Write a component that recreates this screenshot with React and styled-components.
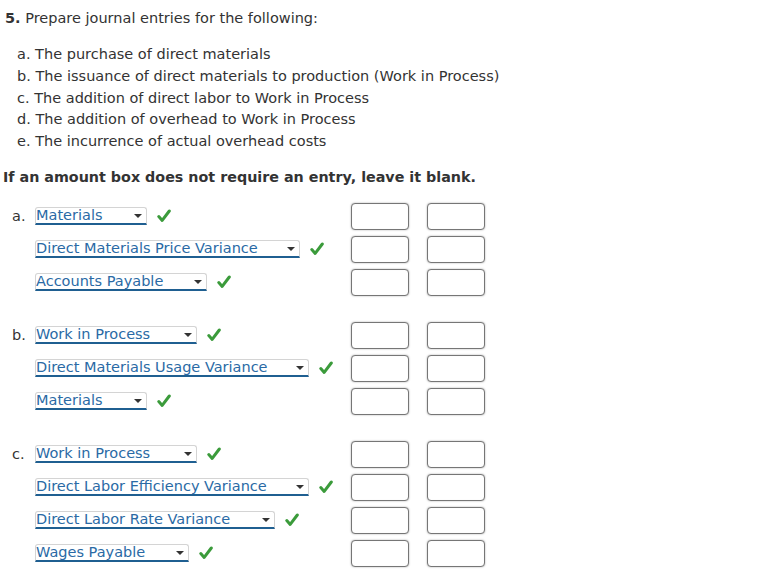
import styled, { createGlobalStyle } from 'styled-components'

const Global = createGlobalStyle`
    body {
        margin: 0;
        background: #fff;
        font-family: "DejaVu Sans", Verdana, sans-serif;
        color: #333;
    }
`

const Page = styled.div`
    padding: 8px 5px 0 5px;
    font-size: 14.5px;
`

const Question = styled.p`
    margin: 0;
    line-height: 20px;
`

const Num = styled.b`
    font-weight: bold;
`

const Parts = styled.ul`
    list-style: none;
    margin: 16px 0 0 0;
    padding: 0 0 0 12px;
`

const Part = styled.li`
    line-height: 21.8px;
`

const Note = styled.p`
    margin: 14px 0 0 -2px;
    font-weight: bold;
    font-size: 14.3px;
    line-height: 20px;
`

const Entries = styled.div`
    margin-top: 13px;
    display: flex;
    flex-direction: column;
    gap: 20px;
`

const Block = styled.div`
    display: flex;
    flex-direction: column;
`

const Row = styled.div`
    display: grid;
    grid-template-columns: 328px 58px 58px;
    column-gap: 18px;
    height: 33px;
    align-items: center;
`

const Left = styled.div`
    display: flex;
    align-items: center;
    padding-left: 7px;
`

const Label = styled.span`
    width: 23px;
    flex: none;
    line-height: 18px;
`

const Select = styled.div`
    width: ${p => p.w}px;
    height: 18px;
    box-sizing: border-box;
    display: flex;
    align-items: center;
    justify-content: space-between;
    border: 1px solid #d4d4d4;
    border-bottom: 2px solid #1f5f91;
    border-radius: 3px 3px 0 0;
    color: #2a6aa5;
    line-height: 15px;
    padding: 0 4px 0 0;
    background: #fff;
`

const SelText = styled.span`
    white-space: nowrap;
    margin-top: -1px;
`

const Caret = styled.span`
    width: 0;
    height: 0;
    border-left: 4px solid transparent;
    border-right: 4px solid transparent;
    border-top: 4px solid #333;
`

const Check = styled.svg`
    width: 14px;
    height: 14px;
    margin-left: 10px;
    flex: none;
`

const Amount = styled.div`
    height: 27px;
    box-sizing: border-box;
    border: 1.5px solid #767676;
    border-radius: 4px;
    background: #fff;
    box-shadow: 0 0 2px rgba(0, 0, 0, 0.35), inset 0 0 1px rgba(0,0,0,0.1);
`

const blocks = [
    { label: 'a.', rows: [['Materials', 112], ['Direct Materials Price Variance', 265], ['Accounts Payable', 172]] },
    { label: 'b.', rows: [['Work in Process', 162], ['Direct Materials Usage Variance', 277], ['Materials', 112]] },
    { label: 'c.', rows: [['Work in Process', 162], ['Direct Labor Efficiency Variance', 276], ['Direct Labor Rate Variance', 240], ['Wages Payable', 154]] },
]

const Tick = () => (
    <Check viewBox="0 0 14 14">
        <path d="M1.8 7.6 L5.2 11.4 L12.3 2" fill="none" stroke="#3b9b3b" strokeWidth="3" strokeLinecap="round" strokeLinejoin="round" />
    </Check>
)

const App = () => {
    return (
        <>
            <Global />
            <Page>
                <Question><Num>5.</Num> Prepare journal entries for the following:</Question>
                <Parts>
                    <Part>a. The purchase of direct materials</Part>
                    <Part>b. The issuance of direct materials to production (Work in Process)</Part>
                    <Part>c. The addition of direct labor to Work in Process</Part>
                    <Part>d. The addition of overhead to Work in Process</Part>
                    <Part>e. The incurrence of actual overhead costs</Part>
                </Parts>
                <Note>If an amount box does not require an entry, leave it blank.</Note>
                <Entries>
                    {blocks.map(b => (
                        <Block key={b.label}>
                            {b.rows.map(([text, w], i) => (
                                <Row key={i}>
                                    <Left>
                                        <Label>{i === 0 ? b.label : ''}</Label>
                                        <Select w={w}>
                                            <SelText>{text}</SelText>
                                            <Caret />
                                        </Select>
                                        <Tick />
                                    </Left>
                                    <Amount />
                                    <Amount />
                                </Row>
                            ))}
                        </Block>
                    ))}
                </Entries>
            </Page>
        </>
    )
}

export default App
